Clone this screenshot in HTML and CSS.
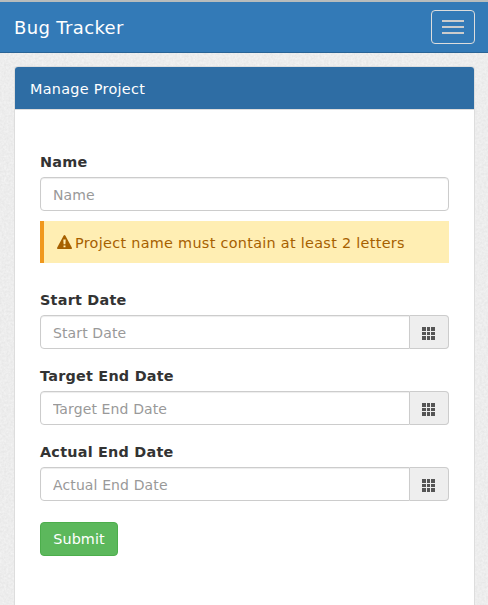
FILE: index.html
```html
<!DOCTYPE html>
<html lang="en">
<head>
<meta charset="utf-8">
<title>Bug Tracker</title>
<link rel="stylesheet" href="styles.css">
</head>
<body>
<svg class="texture" aria-hidden="true"><filter id="grain" color-interpolation-filters="sRGB"><feTurbulence type="fractalNoise" baseFrequency="0.45" numOctaves="2" seed="4"/><feColorMatrix values="0.07 0 0 0 0.893  0.07 0 0 0 0.893  0.07 0 0 0 0.893  0 0 0 0 1"/></filter><rect width="100%" height="100%" filter="url(#grain)"/></svg>
<header class="navbar">
  <a class="brand">Bug Tracker</a>
  <button class="toggle" aria-label="Menu"><span class="bar"></span><span class="bar"></span><span class="bar"></span></button>
</header>
<main class="panel">
  <h1 class="panel-heading">Manage Project</h1>
  <form class="panel-body">
    <div class="group group-name">
      <label class="label" for="name">Name</label>
      <div class="field"><input class="input" id="name" placeholder="Name"></div>
      <div class="warning">
        <svg class="warning-icon" viewBox="0 0 15 14"><path fill="currentColor" fill-rule="evenodd" d="M6.7.5Q7.5-.5 8.3.5L14.8 12.5Q15.2 14 14 14H1Q-.2 14 .2 12.5ZM6.3 4.6L6.6 9.2H8.4L8.7 4.6ZM6.5 10.4V12.3H8.5V10.4Z"/></svg><span>Project name must contain at least 2 letters</span>
      </div>
    </div>
    <div class="group">
      <label class="label" for="start">Start Date</label>
      <div class="field"><input class="input" id="start" placeholder="Start Date"><span class="addon"><svg class="grid-icon" viewBox="0 0 13 13"><path fill="currentColor" d="M0 0h4v4H0zM5 0h3v4H5zM9 0h4v4H9zM0 5h4v3H0zM5 5h3v3H5zM9 5h4v3H9zM0 9h4v4H0zM5 9h3v4H5zM9 9h4v4H9z"/></svg></span></div>
    </div>
    <div class="group">
      <label class="label" for="target">Target End Date</label>
      <div class="field"><input class="input" id="target" placeholder="Target End Date"><span class="addon"><svg class="grid-icon" viewBox="0 0 13 13"><path fill="currentColor" d="M0 0h4v4H0zM5 0h3v4H5zM9 0h4v4H9zM0 5h4v3H0zM5 5h3v3H5zM9 5h4v3H9zM0 9h4v4H0zM5 9h3v4H5zM9 9h4v4H9z"/></svg></span></div>
    </div>
    <div class="group">
      <label class="label" for="actual">Actual End Date</label>
      <div class="field"><input class="input" id="actual" placeholder="Actual End Date"><span class="addon"><svg class="grid-icon" viewBox="0 0 13 13"><path fill="currentColor" d="M0 0h4v4H0zM5 0h3v4H5zM9 0h4v4H9zM0 5h4v3H0zM5 5h3v3H5zM9 5h4v3H9zM0 9h4v4H0zM5 9h3v4H5zM9 9h4v4H9z"/></svg></span></div>
    </div>
    <button class="submit" type="button">Submit</button>
  </form>
</main>
</body>
</html>
```
FILE: styles.css
```css
* { box-sizing: border-box; }
html { height: 100%; overflow: hidden; }
body {
  margin: 0;
  height: 100%;
  display: flex;
  flex-direction: column;
  overflow: hidden;
  background: #ededed;
  color: #333;
  font: 14px/20px "DejaVu Sans", Verdana, sans-serif;
}
.texture { position: absolute; inset: 0; width: 100%; height: 100%; z-index: -1; }
.navbar {
  height: 53px;
  flex: none;
  display: flex;
  align-items: center;
  justify-content: space-between;
  padding: 0 13px 0 14px;
  background: #337ab7;
  border-top: 2px solid #b8bcbc;
  border-bottom: 1px solid #2a6496;
}
.brand { padding-top: 2px; color: #fff; font-size: 18px; letter-spacing: .36px; }
.toggle {
  width: 44px;
  height: 34px;
  padding: 0;
  display: flex;
  flex-direction: column;
  align-items: center;
  justify-content: center;
  gap: 4px;
  background: transparent;
  border: 1px solid #ddd;
  border-radius: 4px;
}
.bar { width: 22px; height: 2px; background: #ccc; }
.panel {
  flex: 1;
  margin: 13px 13px 0 14px;
  background: #fff;
  border: 1px solid #ddd;
  border-bottom: 0;
  border-radius: 4px 4px 0 0;
}
.panel-heading {
  margin: 0;
  height: 43px;
  padding: 12px 15px 10px;
  background: #2e6da4;
  border-bottom: 1px solid #ddd;
  border-radius: 3px 3px 0 0;
  color: #fff;
  font-size: 14.4px;
  line-height: 20px;
  font-weight: 400;
  letter-spacing: .3px;
}
.panel-body { padding: 42px 25px 0; }
.group { margin-bottom: 17px; }
.group-name { margin-bottom: 27px; }
.label {
  display: block;
  height: 20px;
  margin-bottom: 5px;
  font-size: 14.4px;
  font-weight: 700;
  line-height: 20px;
  letter-spacing: .23px;
}
.field { display: flex; height: 34px; }
.input {
  flex: 1;
  min-width: 0;
  padding: 8px 12px 6px;
  background: #fff;
  border: 1px solid #ccc;
  border-radius: 4px;
  box-shadow: inset 0 1px 1px rgba(0,0,0,.075);
  font: inherit;
  letter-spacing: .12px;
}
.input:not(:last-child) { border-radius: 4px 0 0 4px; }
.input::placeholder { color: #999; opacity: 1; }
.addon {
  width: 39px;
  padding-right: 2px;
  display: flex;
  align-items: center;
  justify-content: center;
  background: #eee;
  border: 1px solid #ccc;
  border-left: 0;
  border-radius: 0 4px 4px 0;
  color: #555;
}
.grid-icon { width: 13px; height: 13px; margin-top: 3px; }
.warning {
  height: 42px;
  margin-top: 10px;
  padding: 1px 0 0 13px;
  display: flex;
  align-items: center;
  gap: 3px;
  background: #ffeeb3;
  border-left: 4px solid #f0981e;
  color: #a66000;
  font-size: 14.4px;
  letter-spacing: .3px;
}
.warning-icon { width: 15px; height: 14px; margin-top: -1px; }
.submit {
  display: block;
  width: 78px;
  height: 34px;
  margin-top: 21px;
  padding: 0;
  background: #5cb85c;
  border: 1px solid #4cae4c;
  border-radius: 4px;
  color: #fff;
  font: inherit;
  font-size: 14.4px;
  letter-spacing: .1px;
}
```
